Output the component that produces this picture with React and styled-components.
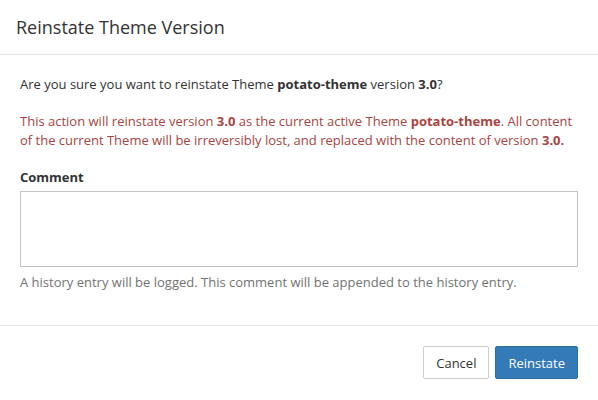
import React from 'react';
import styled, { createGlobalStyle } from 'styled-components';

const GlobalStyle = createGlobalStyle`
  html, body {
    margin: 0;
    padding: 0;
    background: #fff;
  }
  body {
    font-family: "Open Sans", "Liberation Sans", sans-serif;
    font-size: 13px;
    color: #333;
  }
  * { box-sizing: border-box; }
`;

const Modal = styled.div`
  width: 598px;
  height: 400px;
  background: #fff;
  display: flex;
  flex-direction: column;
`;

const Header = styled.div`
  height: 55px;
  padding: 0 16px;
  display: flex;
  align-items: center;
  border-bottom: 1px solid #e5e5e5;
`;

const Title = styled.h4`
  margin: 0;
  font-size: 18px;
  font-weight: 400;
  color: #333;
`;

const Body = styled.div`
  flex: 1;
  padding: 20px 20px 0;
  border-bottom: 1px solid #e5e5e5;
`;

const Para = styled.p`
  margin: 0 0 18px;
  line-height: 19px;
  color: ${p => (p.$danger ? '#a94442' : '#333')};
`;

const Label = styled.label`
  display: block;
  font-weight: 700;
  line-height: 19px;
  margin-bottom: 4px;
`;

const TextArea = styled.textarea`
  display: block;
  width: 100%;
  height: 76px;
  border: 1px solid #c4c4c4;
  resize: none;
  font-family: inherit;
  font-size: 13px;
  outline: none;
`;

const Help = styled.p`
  margin: 6px 0 0;
  line-height: 19px;
  color: #737373;
`;

const Footer = styled.div`
  height: 74px;
  padding: 20px;
  display: flex;
  justify-content: flex-end;
  align-items: flex-start;
  gap: 6px;
`;

const Button = styled.button`
  height: 33px;
  padding: 0 12px;
  font-family: inherit;
  font-size: 13px;
  border-radius: 2px;
  cursor: pointer;
  border: 1px solid ${p => (p.$primary ? '#2e6da4' : '#ccc')};
  background: ${p => (p.$primary ? '#337ab7' : '#fff')};
  color: ${p => (p.$primary ? '#fff' : '#333')};
`;

export default function App() {
  return (
    <>
      <GlobalStyle />
      <Modal>
        <Header>
          <Title>Reinstate Theme Version</Title>
        </Header>
        <Body>
          <Para>
            Are you sure you want to reinstate Theme <b>potato-theme</b> version <b>3.0</b>?
          </Para>
          <Para $danger>
            This action will reinstate version <b>3.0</b> as the current active Theme{' '}
            <b>potato-theme</b>. All content of the current Theme will be irreversibly lost,
            and replaced with the content of version <b>3.0.</b>
          </Para>
          <Label>Comment</Label>
          <TextArea />
          <Help>A history entry will be logged. This comment will be appended to the history entry.</Help>
        </Body>
        <Footer>
          <Button>Cancel</Button>
          <Button $primary>Reinstate</Button>
        </Footer>
      </Modal>
    </>
  );
}
